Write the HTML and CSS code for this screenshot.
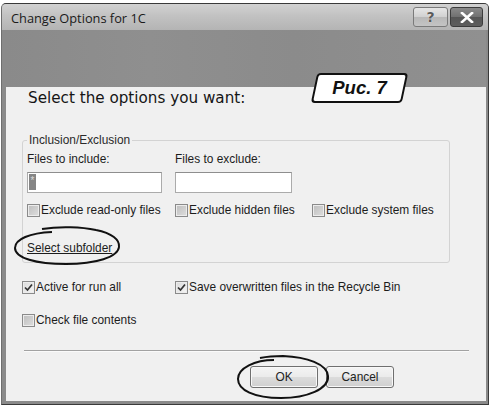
FILE: index.html
```html
<!DOCTYPE html>
<html>
<head>
<meta charset="utf-8">
<link rel="stylesheet" href="styles.css">
</head>
<body>
<div class="window">
  <div class="titlebar">
    <span class="title">Change Options for 1C</span>
    <div class="tb-buttons">
      <span class="tb-btn help">?</span>
      <span class="tb-btn close"><svg width="14" height="11" viewBox="0 0 14 11"><path d="M2 1 L12 10 M12 1 L2 10" stroke="#fff" stroke-width="2.6" stroke-linecap="square"/></svg></span>
    </div>
  </div>
  <div class="frame">
    <div class="banner"></div>
    <div class="client">
      <h1 class="heading">Select the options you want:</h1>
      <fieldset class="group">
        <legend>Inclusion/Exclusion</legend>
        <div class="fields">
          <div class="field f1"><span class="lbl">Files to include:</span><span class="input"><span class="sel">*</span></span></div>
          <div class="field f2"><span class="lbl">Files to exclude:</span><span class="input"></span></div>
        </div>
        <div class="checks3">
          <span class="cb"><span class="box"></span>Exclude read-only files</span>
          <span class="cb"><span class="box"></span>Exclude hidden files</span>
          <span class="cb"><span class="box"></span>Exclude system files</span>
        </div>
        <div class="linkrow"><span class="link">Select subfolder</span></div>
      </fieldset>
      <div class="opts">
        <span class="cb"><span class="box checked"><svg width="9" height="9" viewBox="0 0 9 9"><path d="M1 4.5 L3.5 7 L8 1.5" fill="none" stroke="#333" stroke-width="1.7"/></svg></span>Active for run all</span>
        <span class="cb"><span class="box checked"><svg width="9" height="9" viewBox="0 0 9 9"><path d="M1 4.5 L3.5 7 L8 1.5" fill="none" stroke="#333" stroke-width="1.7"/></svg></span>Save overwritten files in the Recycle Bin</span>
      </div>
      <div class="opt-single">
        <span class="cb"><span class="box"></span>Check file contents</span>
      </div>
      <div class="sep"></div>
      <div class="buttons">
        <span class="btn ok">OK</span>
        <span class="btn">Cancel</span>
      </div>
    </div>
  </div>
</div>
<div class="tag"><span>Рис. 7</span></div>
<svg class="mark mark1" width="120" height="50" viewBox="0 0 120 50">
  <path d="M42 8 C60 5 82 6 96 9 C112 12 120 19 119 26 C118 36 96 43 66 43 C36 43 15 37 15 27 C15 18 30 12 52 11" fill="none" stroke="#111" stroke-width="2"/>
</svg>
<svg class="mark mark2" width="110" height="60" viewBox="0 0 110 60">
  <path d="M33 10 C38 9 48 8 56 8 C80 9 100 16 101 28 C102 41 80 50 54 50 C27 50 11 42 11 31 C11 20 28 12 47 12" fill="none" stroke="#111" stroke-width="2"/>
</svg>
</body>
</html>
```
FILE: styles.css
```css
* { box-sizing: border-box; }
html, body { margin: 0; padding: 0; background: #fff; }
body {
  position: relative;
  width: 493px;
  height: 405px;
  overflow: hidden;
  font-family: "Liberation Sans", Arial, sans-serif;
  font-size: 11.9px;
  color: #1c1c1c;
}
.window {
  margin: 3px 4px 0 1px;
  border: 1px solid #3a3a3a;
  border-left-color: #6e6e6e;
  border-radius: 5px 5px 0 0;
  background: #8c8c8c;
}
.titlebar {
  height: 26px;
  display: flex;
  justify-content: space-between;
  align-items: center;
  padding: 0 5px 0 9px;
  background: linear-gradient(#d2d2d2, #c2c2c2 45%, #b4b4b4);
  border-radius: 4px 4px 0 0;
}
.title {
  font-family: "Open Sans", sans-serif;
  font-size: 12.8px;
  color: #1a1a1a;
  margin-top: 1px;
}
.tb-buttons {
  display: flex;
  gap: 2px;
  align-self: flex-start;
  margin-top: 3px;
}
.tb-btn {
  display: flex;
  align-items: center;
  justify-content: center;
  height: 20px;
  border-radius: 3px;
}
.help {
  width: 35px;
  border: 1px solid #7a7a7a;
  background: linear-gradient(#e6e6e6, #d0d0d0 50%, #b8b8b8 51%, #c4c4c4);
  font-family: "DejaVu Sans", sans-serif;
  font-weight: bold;
  font-size: 14px;
  color: #5a5a5a;
  text-shadow: 0 0 1px #fff;
}
.close {
  width: 33px;
  border: 1px solid #3c3c3c;
  background: linear-gradient(#8a8a8a, #707070 50%, #555 51%, #5e5e5e);
}
.frame {
  padding: 0 2px 3px 4px;
  background: #8a8a8a;
}
.banner {
  height: 57px;
  background: linear-gradient(90deg, #8a8a8a, #8f8f8f 30%, #8b8b8b 60%, #909090);
}
.client {
  height: 314px;
  background: #f0f0f0;
  padding-top: 1px;
}
.heading {
  margin: 0 0 0 22px;
  font-family: "DejaVu Sans", sans-serif;
  font-weight: normal;
  font-size: 15.2px;
  line-height: 20px;
  color: #151515;
}
.group {
  margin: 25px 0 0 16px;
  width: 428px;
  border: 1px solid #d3d3d3;
  border-radius: 3px;
  padding: 0 4px 7px 4px;
  min-width: 0;
}
.group legend {
  padding: 0 2px;
  line-height: 14px;
  color: #2a2a2a;
}
.fields {
  display: grid;
  grid-template-columns: 148px auto;
  margin-top: 5px;
}
.field {
  display: flex;
  flex-direction: column;
  align-items: flex-start;
  gap: 6px;
}
.lbl { line-height: 14px; }
.input {
  display: flex;
  height: 21px;
  background: #fff;
  border: 1px solid #ababab;
  border-top-color: #8e8e8e;
}
.f1 .input { width: 135px; }
.f2 .input { width: 117px; }
.sel {
  margin: 1px 0 0 1px;
  width: 7px;
  height: 16px;
  background: #858585;
  color: #d8d8d8;
  font-size: 10px;
  line-height: 13px;
  text-align: center;
}
.checks3 {
  display: grid;
  grid-template-columns: 148px 137px auto;
  margin-top: 10px;
}
.cb {
  display: flex;
  align-items: center;
  gap: 1px;
  line-height: 14px;
  white-space: nowrap;
}
.box {
  display: flex;
  align-items: center;
  justify-content: center;
  width: 13px;
  height: 13px;
  flex: none;
  border: 1px solid #8a8a8a;
  background: linear-gradient(135deg, #bdbdbd, #dedede);
  box-shadow: inset 0 0 0 1px #ececec;
}
.box.checked {
  background: linear-gradient(135deg, #dadada, #f6f6f6);
}
.linkrow {
  margin-top: 24px;
  line-height: 14px;
}
.link {
  text-decoration: underline;
  color: #1c1c1c;
}
.opts {
  display: grid;
  grid-template-columns: 153px auto;
  margin: 17px 0 0 16px;
}
.opt-single {
  margin: 19px 0 0 16px;
}
.sep {
  margin: 23px 0 0 18px;
  width: 445px;
  border-top: 1px solid #a2a2a2;
  border-bottom: 1px solid #fafafa;
}
.buttons {
  display: flex;
  justify-content: flex-end;
  gap: 8px;
  margin-top: 14px;
  padding-right: 92px;
}
.btn {
  display: flex;
  align-items: center;
  justify-content: center;
  height: 22px;
  width: 68px;
  border: 1px solid #6f6f6f;
  border-radius: 3px;
  background: linear-gradient(#f4f4f4, #ebebeb 48%, #dcdcdc 50%, #cfcfcf);
  box-shadow: inset 0 0 0 1px #f8f8f8;
  color: #222;
}
.tag {
  position: absolute;
  left: 314px;
  top: 73px;
  width: 91px;
  height: 30px;
  display: flex;
  align-items: center;
  justify-content: center;
}
.tag::before {
  content: "";
  position: absolute;
  inset: 0;
  border: 2px solid #111;
  border-radius: 4px;
  background: #fff;
  transform: skewX(-12deg);
}
.tag span {
  position: relative;
  font-family: "Liberation Sans", Arial, sans-serif;
  font-weight: bold;
  font-style: italic;
  font-size: 18.5px;
  color: #111;
}
.mark {
  position: absolute;
  overflow: visible;
}
.mark1 { left: 0; top: 221px; }
.mark2 { left: 227px; top: 348px; }
```
